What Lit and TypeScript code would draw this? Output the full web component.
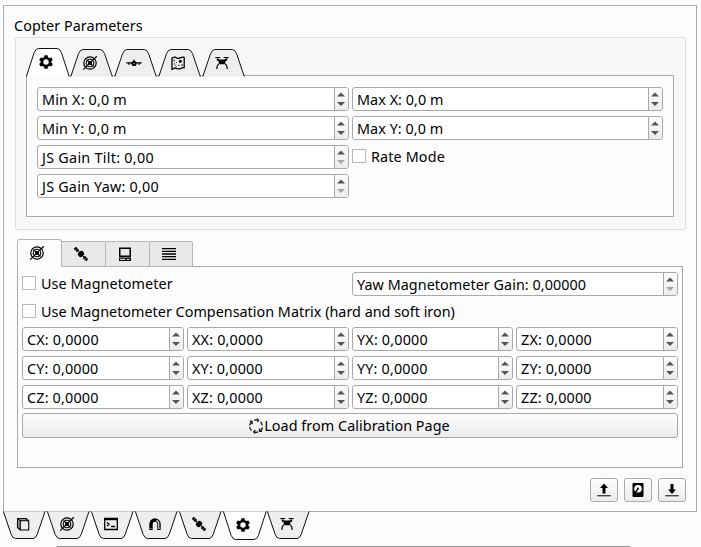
import { LitElement, html, css, svg } from "lit";
import { customElement, property } from "lit/decorators.js";
import { styleMap } from "lit/directives/style-map.js";

const target = svg`<circle cx="8" cy="8" r="6.2" fill="none" stroke="#000" stroke-width="1.200"/><circle cx="8" cy="8" r="3.800" fill="none" stroke="#000" stroke-width="1.100"/><circle cx="8" cy="8" r="1.500" fill="none" stroke="#000"/><path d="M1.200 14.600 14.800 1.200M4.500 4.500l7 7" stroke="#000" stroke-width="1.200" fill="none"/>`;
const satellite = svg`<g transform="rotate(45 8 8)"><path d="M-.8 6.500h4.800v3H-.8zM12 6.500h4.800v3H12z"/><path d="M5.400 6.200 6.500 5h3l1.100 1.200v3.600L9.500 11h-3L5.400 9.800z"/><path d="M4 8h8" stroke="#000"/><path d="M1.500 6.500v3M14.500 6.500v3" stroke="#eee" stroke-width=".4"/></g>`;
const drone = svg`<path d="M1.300 2.500h5M9.700 2.500h5M3.800 2.200v2M12.200 2.200v2" stroke="#000" stroke-width="1" fill="none"/><path d="M2.800 3.400 5.500 4.600h5l2.700-1.200v1.900L11.200 6.500v1.800l-1.400.9H6.200l-1.400-.9V6.500L2.800 5.300z"/><path d="M5.500 8.500Q2.700 9.800 2.900 14M10.500 8.500q2.800 1.300 2.600 5.500" stroke="#000" stroke-width="1.200" fill="none"/>`;
const gear = svg`<path fill-rule="evenodd" d="M6.500 1.200h3l.5 2 1.300.8 2-.6 1.500 2.600L13.300 7.400v1.200l1.500 1.400-1.500 2.600-2-.6-1.300.8-.5 2h-3l-.5-2-1.300-.8-2 .6L1.200 10l1.500-1.400V7.400L1.200 6l1.500-2.600 2 .6L6 3.200zM8 5.300a2.700 2.700 0 1 0 0 5.400 2.700 2.700 0 0 0 0-5.400z"/>`;

const icons: Record<string, unknown> = {
  target, satellite, drone, gear,
  plane: svg`<path d="M.3 7.300h5.500L7.300 6 7.600 4.500h.8L8.700 6l1.500 1.300h5.500v1.200H13.800v1.200h-1.400V8.500H10.500l-1 2.300h-3l-1-2.300H3.600v1.200H2.200V8.500H.3z"/><circle cx="8" cy="8.400" r="2.500"/><circle cx="8" cy="8.600" r=".7" fill="#eee"/>`,
  map: svg`<path d="M2 3 5 1.900q3 2.300 5 1 2-1.200 3.800-.7l.4.500v10q-2-.3-4 1-2.200.7-5-.8l-3.200 1.300z" fill="none" stroke="#000" stroke-width="1.300"/><path d="M4.200 4.500v2M4 9h1.200M5.500 10.500l.8 1M12 9v2M8 10.800l1.500-.8" stroke="#000" stroke-width=".9"/><circle cx="10.300" cy="6.300" r="1.500"/><circle cx="6.600" cy="7.500" r=".5"/>`,
  monitor: svg`<path fill-rule="evenodd" d="M2 1.500h12V11H2zM3.500 3v6.500h9V3z"/><path d="M2 11.500h12V15H2z"/><path d="M3.200 13.400h5" stroke="#eee" stroke-width="1.200"/><path d="M10 13.400h2.500" stroke="#eee"/>`,
  list: svg`<path d="M1 2.600h14M1 5.300h14M1 8h14M1 10.700h14M1 13.400h14" stroke="#000" stroke-width="1.300"/>`,
  cube: svg`<path d="M2.500 2.500H11l2.500 2.300H5.300zM2.500 2.500v9l2.800 2.300v-9z" fill="#999"/><path d="M2.500 2.500H11l2.700 2.300v9.200H5.300l-2.800-2.500zM2.500 2.500l2.800 2.300h8.200M5.300 4.800V14" stroke="#000" stroke-width="1.100" fill="none" stroke-linejoin="round"/>`,
  terminal: svg`<path d="M1.700 2.500h12.600v11H1.700z" fill="none" stroke="#000" stroke-width="1.300"/><path d="M1.200 2h13.600v2.200H1.200z"/><path d="m4 6.500 2 1.700-2 1.700M8 10.500h4" fill="none" stroke="#000" stroke-width="1.300"/>`,
  magnet: svg`<path d="M2.300 14V8a5.700 5.700 0 0 1 11.400 0v6h-3.400V8a2.300 2.300 0 0 0-4.600 0v6z"/><path d="M11.800 13V8a3.800 3.800 0 0 0-2.400-3.600" fill="none" stroke="#ddd" stroke-width="1.200"/><path d="M2.500 12.500h3.200M10.300 12.500h3.200" stroke="#999" stroke-width=".7"/>`,
  up: svg`<path d="M8 1.500 12 6H9.500v5.500h-3V6H4z"/><path d="M1.200 13.700h13.600" stroke="#444" stroke-width="1.400"/>`,
  down: svg`<path d="M8 12 12 7.500H9.500V2h-3v5.500H4z"/><path d="M1.200 13.700h13.600" stroke="#444" stroke-width="1.400"/>`,
  disk: svg`<rect x="2.500" y="1" width="11" height="14" rx="1"/><circle cx="8" cy="6.700" r="3.800" fill="#fff"/><circle cx="8" cy="6.500" r="1"/><path d="m8 7-2.800 3.500" stroke="#000" stroke-width="1.300"/>`,
  cycle: svg`<path d="M4 3.200H1.800M4.200 3.200v3M3.500 4Q2 5.500 1.700 7.500M6 2.300Q8 1.400 10.300 2.300M9 .8l1.500 1.600-1.200 1.500M12.500 3.800Q14 5.500 14.200 7.500M14.500 9.500q-.5 2.200-2 3.500M11.500 10.500v2.800H14M10 14q-2 .7-4 0M7.500 12.200 5.800 13.800l1.500 1.700M3.500 12.500Q2 11 1.700 9" fill="none" stroke="#222" stroke-width="1.400"/>`,
};
const icon = (name: string) => svg`${icons[name]}`;

@customElement("ui-icon")
class UiIcon extends LitElement {
  @property() name = "";
  static styles = css`
    :host { display: block; width: 16px; height: 16px; flex: none; }
    svg { display: block; width: 100%; height: 100%; overflow: visible; }
  `;
  render() {
    return html`<svg viewBox="0 0 16 16">${icon(this.name)}</svg>`;
  }
}

@customElement("spin-box")
class SpinBox extends LitElement {
  @property() text = "";
  @property({ type: Number }) tracking = 0.18;
  @property({ type: Boolean }) atMin = false;
  static styles = css`
    :host { display: flex; box-sizing: border-box; height: 24px; border: 1px solid #a9a9a9; border-radius: 3px; background: #fff; overflow: hidden; white-space: nowrap; }
    .text { flex: 1; padding-left: 4px; line-height: 23px; }
    .buttons { width: 13px; border-left: 1px solid #a9a9a9; background: linear-gradient(#fdfdfd, #ececec); }
    svg { display: block; }
    .dim { fill: #a5a5a5; }
  `;
  render() {
    return html`<span class="text" style=${styleMap({ letterSpacing: `${this.tracking}px` })}>${this.text}</span>
      <span class="buttons"><svg width="13" height="22" fill="#555"><path d="M2 8.500 6 4.500 10 8.500z"/><path class=${this.atMin ? "dim" : ""} d="M2 14h8l-4 4z"/></svg></span>`;
  }
}

@customElement("check-box")
class CheckBox extends LitElement {
  static styles = css`
    :host { display: flex; align-items: center; gap: 5px; height: 20px; white-space: nowrap; }
    .box { box-sizing: border-box; width: 14px; height: 14px; border: 1px solid #b9b9b9; background: #fff; }
  `;
  render() {
    return html`<span class="box"></span><slot></slot>`;
  }
}

@customElement("slant-tabs")
class SlantTabs extends LitElement {
  @property({ type: Array }) names: string[] = [];
  @property({ type: Number }) active = 0;
  @property({ type: Boolean, reflect: true }) down = false;
  static styles = css`
    :host { display: flex; height: 29px; }
    .tab { position: relative; width: 44px; height: 29px; flex: none; }
    .shape { display: block; overflow: visible; }
    :host([down]) .shape { transform: scaleY(-1); }
    ui-icon { position: absolute; left: 12px; top: 7px; }
    .on ui-icon { top: 6px; }
    :host([down]) ui-icon { top: 5px; }
    :host([down]) .on ui-icon { top: 6px; }
  `;
  render() {
    return this.names.map((n, i) => {
      const on = i === this.active;
      const y = on ? 0.5 : 1.5;
      const left = on || this.down ? 0.4 : 0.8;
      const right = on ? 43.2 : this.down ? 42 : 42.3;
      return html`<div class="tab ${on ? "on" : ""}">
        <svg class="shape" width="44" height="29">
          <path d="M${left} 28.500L${left + 7.800} ${y + 4}Q${left + 9.500} ${y} ${left + 12} ${y}H${right - 12}Q${right - 9.500} ${y} ${right - 7.800} ${y + 4}L${right} 28.500" fill=${on ? "#fff" : "#eee"} stroke="#111"/>
        </svg><ui-icon name=${n}></ui-icon></div>`;
    });
  }
}

@customElement("app-root")
class AppRoot extends LitElement {
  static styles = css`
    :host { display: block; box-sizing: border-box; width: 701px; height: 547px; padding: 5px 4px 0 3px; background: #fcfcfc; overflow: hidden; color: #000; font: 14.370px "Noto Sans", sans-serif; }
    .frame { box-sizing: border-box; height: 507px; border: 1px solid #a9a9a9; padding: 11px 10px 0 11px; }
    .title { height: 20px; line-height: 17px; margin-left: -1px; letter-spacing: .06px; }
    .group { box-sizing: border-box; width: 671px; height: 193px; border: 1px solid #dedede; border-radius: 2px; background: #f8f8f8; padding: 10px 10px; }
    .pane { box-sizing: border-box; width: 648px; height: 142px; border: 1px solid #a9a9a9; background: #fcfcfc; padding: 11px 10px; }
    .group slant-tabs { position: relative; margin-bottom: -2px; }
    .two { display: grid; grid-template-columns: 312px 311px; grid-auto-rows: 24px; gap: 5px 3px; }
    .two check-box { height: 22px; letter-spacing: .14px; }
    .tabs { display: flex; align-items: flex-end; position: relative; height: 28px; margin: 9px 0 -1px 2px; }
    .tab { box-sizing: border-box; width: 44px; height: 26px; border: 1px solid #b4b4b4; border-left-width: 0; border-radius: 0 2px 0 0; background: #e9e9e9; display: flex; justify-content: center; padding: 4px 5px 0 0; }
    .tab.on { height: 28px; width: 45px; border-left-width: 1px; border-bottom: 0; border-radius: 3px 3px 0 0; background: #fcfcfc; padding-top: 5px; }
    .tab:last-child { width: 43px; }
    .lower { box-sizing: border-box; width: 666px; height: 202px; margin-left: 2px; border: 1px solid #a9a9a9; padding: 5px 4px; }
    .row { display: flex; justify-content: space-between; height: 29px; }
    .row check-box { height: 22px; letter-spacing: .06px; }
    .row spin-box { width: 326px; }
    .matrix-check { height: 20px; letter-spacing: .01px; }
    .matrix { display: grid; grid-template-columns: 162px 162px 161px 162px; gap: 5px 3px; margin-top: 6px; }
    .button { box-sizing: border-box; display: flex; align-items: center; justify-content: center; border: 1px solid #a9a9a9; border-radius: 3px; background: linear-gradient(#fdfdfd, #ececec); }
    .load { height: 25px; margin-top: 4px; padding-right: 2px; letter-spacing: .05px; }
    .actions { display: flex; justify-content: flex-end; gap: 6px; margin-top: 10px; }
    .actions .button { width: 28px; height: 24px; }
    .bottom { margin-top: -1px; position: relative; }
    .next { width: 575px; height: 6px; margin: 6px 0 0 53px; border-top: 1px solid #999; border-radius: 2px 2px 0 0; }
  `;
  render() {
    const cells = ["CX", "XX", "YX", "ZX", "CY", "XY", "YY", "ZY", "CZ", "XZ", "YZ", "ZZ"];
    return html`
      <div class="frame">
        <div class="title">Copter Parameters</div>
        <div class="group">
          <slant-tabs .names=${["gear", "target", "plane", "map", "drone"]} .active=${0}></slant-tabs>
          <div class="pane two">
            <spin-box text="Min X: 0,0 m"></spin-box><spin-box text="Max X: 0,0 m" .tracking=${0.06}></spin-box>
            <spin-box text="Min Y: 0,0 m"></spin-box><spin-box text="Max Y: 0,0 m" .tracking=${0.06}></spin-box>
            <spin-box text="JS Gain Tilt: 0,00" .tracking=${0.27} .atMin=${true}></spin-box><check-box>Rate Mode</check-box>
            <spin-box text="JS Gain Yaw: 0,00" .tracking=${0.22} .atMin=${true}></spin-box>
          </div>
        </div>
        <div class="tabs">
          ${["target", "satellite", "monitor", "list"].map((n, i) => html`<div class="tab ${i ? "" : "on"}"><ui-icon name=${n}></ui-icon></div>`)}
        </div>
        <div class="lower">
          <div class="row">
            <check-box>Use Magnetometer</check-box>
            <spin-box text="Yaw Magnetometer Gain: 0,00000" .tracking=${0.05} .atMin=${true}></spin-box>
          </div>
          <check-box class="matrix-check">Use Magnetometer Compensation Matrix (hard and soft iron)</check-box>
          <div class="matrix">${cells.map((c) => html`<spin-box text="${c}: 0,0000"></spin-box>`)}</div>
          <div class="button load"><ui-icon name="cycle"></ui-icon><span>Load from Calibration Page</span></div>
        </div>
        <div class="actions">
          ${["up", "disk", "down"].map((n) => html`<div class="button"><ui-icon name=${n}></ui-icon></div>`)}
        </div>
      </div>
      <slant-tabs class="bottom" down .names=${["cube", "target", "terminal", "magnet", "satellite", "gear", "drone"]} .active=${5}></slant-tabs>
      <div class="next"></div>
    `;
  }
}
